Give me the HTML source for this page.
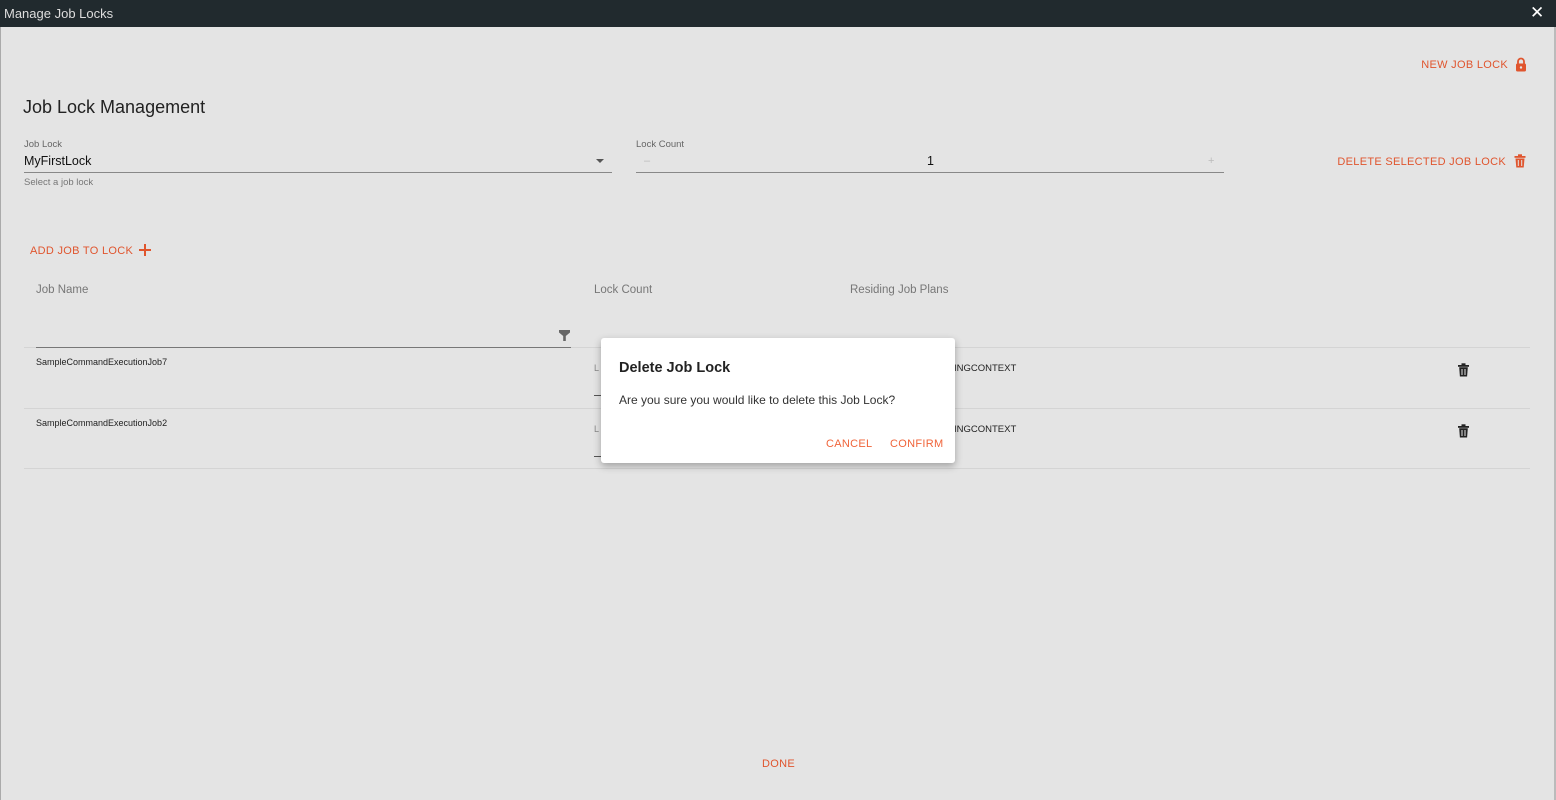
<!DOCTYPE html>
<html><head><style>
*{box-sizing:border-box;margin:0;padding:0}
body{width:1556px;height:800px;background:#e4e4e4;font-family:"Liberation Sans",sans-serif;position:relative;overflow:hidden;color:#222}
.a{position:absolute;white-space:nowrap}
.or{color:#e0552e;letter-spacing:0.3px;font-size:11px}
.hd{color:#777;font-size:11.5px}
</style></head><body>
<div class="a" style="left:0;top:0;width:1556px;height:27px;background:#212a2e"></div>
<div class="a" style="left:4px;top:6px;font-size:13px;color:#ddd">Manage Job Locks</div>
<div class="a" style="left:1530px;top:3px;font-size:17px;color:#fff">✕</div>
<div class="a" style="left:0;top:27px;width:1px;height:773px;background:#aaa"></div>
<div class="a" style="left:1554px;top:27px;width:2px;height:773px;background:#bbb"></div>

<div class="a or" style="right:48px;top:59px">NEW JOB LOCK</div>
<svg class="a" style="left:1515px;top:57px" width="12" height="15" viewBox="0 0 12 15"><path d="M3 7V4.5a3 3 0 0 1 6 0V7" fill="none" stroke="#e0552e" stroke-width="1.8"/><rect x="1" y="6.5" width="10" height="8" rx="1.5" fill="#e0552e"/><circle cx="6" cy="10.5" r="1.2" fill="#e4e4e4"/></svg>

<div class="a" style="left:23px;top:97px;font-size:18px;color:#222">Job Lock Management</div>
<div class="a" style="left:24px;top:139px;font-size:9.5px;color:#666">Job Lock</div>
<div class="a" style="left:24px;top:154px;font-size:12.5px;color:#111">MyFirstLock</div>
<div class="a" style="left:596px;top:159px;width:0;height:0;border-left:4px solid transparent;border-right:4px solid transparent;border-top:4px solid #555"></div>
<div class="a" style="left:24px;top:172px;width:588px;height:1px;background:#888"></div>
<div class="a" style="left:24px;top:177px;font-size:9.5px;color:#777">Select a job lock</div>

<div class="a" style="left:636px;top:139px;font-size:9.5px;color:#666">Lock Count</div>
<div class="a" style="left:644px;top:155px;font-size:11px;color:#bbb">–</div>
<div class="a" style="left:927px;top:154px;font-size:12.5px;color:#111">1</div>
<div class="a" style="left:1208px;top:155px;font-size:11px;color:#bbb">+</div>
<div class="a" style="left:636px;top:172px;width:588px;height:1px;background:#888"></div>

<div class="a or" style="right:50px;top:156px">DELETE SELECTED JOB LOCK</div>
<svg class="a" style="left:1514px;top:154px" width="12" height="14" viewBox="0 0 12 14"><rect x="0.5" y="2" width="11" height="1.8" fill="#e0552e"/><rect x="4" y="0.3" width="4" height="2" fill="#e0552e"/><path d="M1.5 4.5h9l-.8 9h-7.4z" fill="#e0552e"/><path d="M4.3 6v6M7.7 6v6" stroke="#e4e4e4" stroke-width="1"/></svg>

<div class="a or" style="left:30px;top:245px">ADD JOB TO LOCK</div>
<svg class="a" style="left:139px;top:244px" width="12" height="12" viewBox="0 0 12 12"><path d="M6 0v12M0 6h12" stroke="#e0552e" stroke-width="2"/></svg>

<div class="a hd" style="left:36px;top:284px">Job Name</div>
<div class="a hd" style="left:594px;top:284px">Lock Count</div>
<div class="a hd" style="left:850px;top:284px">Residing Job Plans</div>
<svg class="a" style="left:559px;top:330px" width="11" height="11" viewBox="0 0 11 11"><path d="M0 0h11v2.5L6.8 6v5H4.2V6L0 2.5z" fill="#666"/></svg>
<div class="a" style="left:24px;top:347px;width:1506px;height:1px;background:#d4d4d4"></div>
<div class="a" style="left:36px;top:347px;width:535px;height:1px;background:#777"></div>
<div class="a" style="left:36px;top:357px;font-size:9px;color:#222">SampleCommandExecutionJob7</div>
<div class="a" style="left:594px;top:363px;font-size:9px;color:#888">L</div>
<div class="a" style="left:594px;top:395px;width:10px;height:1px;background:#555"></div>
<div class="a" style="left:954px;top:363px;font-size:9.5px;color:#222">INGCONTEXT</div>
<div class="a" style="left:24px;top:408px;width:1506px;height:1px;background:#d4d4d4"></div>
<div class="a" style="left:36px;top:418px;font-size:9px;color:#222">SampleCommandExecutionJob2</div>
<div class="a" style="left:594px;top:424px;font-size:9px;color:#888">L</div>
<div class="a" style="left:594px;top:456px;width:10px;height:1px;background:#555"></div>
<div class="a" style="left:954px;top:424px;font-size:9.5px;color:#222">INGCONTEXT</div>
<div class="a" style="left:24px;top:468px;width:1506px;height:1px;background:#d4d4d4"></div>

<svg class="a" style="left:1458px;top:363px" width="11" height="14" viewBox="0 0 11 14"><rect x="0" y="2" width="11" height="1.8" fill="#222"/><rect x="3.5" y="0.3" width="4" height="2" fill="#222"/><path d="M1.2 4.3h8.6l-.7 9.2H1.9z" fill="#222"/><path d="M4 6v6M7 6v6" stroke="#e4e4e4" stroke-width="1"/></svg>
<svg class="a" style="left:1458px;top:424px" width="11" height="14" viewBox="0 0 11 14"><rect x="0" y="2" width="11" height="1.8" fill="#222"/><rect x="3.5" y="0.3" width="4" height="2" fill="#222"/><path d="M1.2 4.3h8.6l-.7 9.2H1.9z" fill="#222"/><path d="M4 6v6M7 6v6" stroke="#e4e4e4" stroke-width="1"/></svg>

<div class="a" style="left:601px;top:338px;width:354px;height:125px;background:#fff;border-radius:3px;box-shadow:0 3px 8px rgba(0,0,0,0.3)"></div>
<div class="a" style="left:619px;top:360px;font-size:14.5px;font-weight:bold;color:#222">Delete Job Lock</div>
<div class="a" style="left:619px;top:393px;font-size:12px;color:#333">Are you sure you would like to delete this Job Lock?</div>
<div class="a or" style="left:826px;top:438px;color:#f0643a">CANCEL</div>
<div class="a or" style="left:890px;top:438px;color:#f0643a">CONFIRM</div>

<div class="a or" style="left:762px;top:758px">DONE</div>
</body></html>
